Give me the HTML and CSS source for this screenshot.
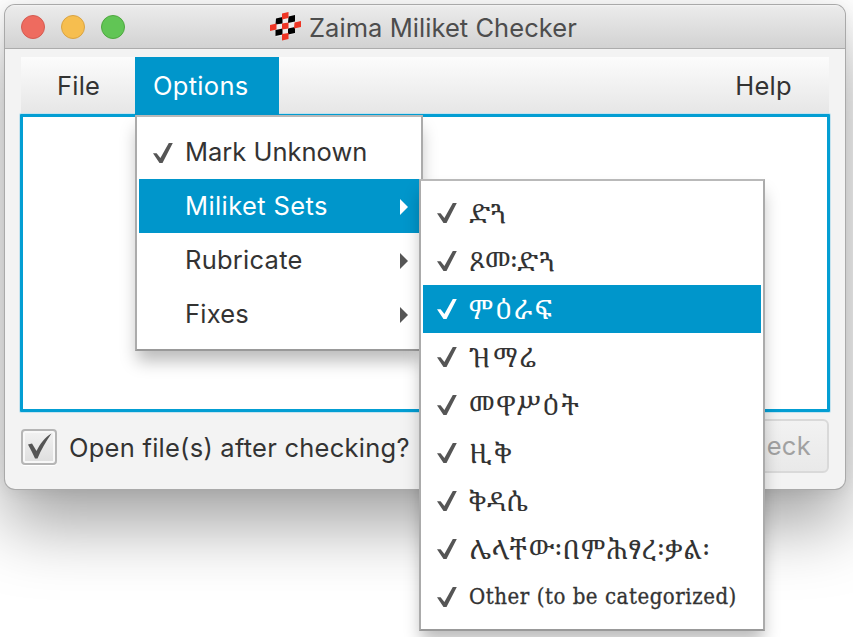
FILE: index.html
```html
<!DOCTYPE html>
<html lang="en">
<head>
<meta charset="utf-8">
<title>Zaima Miliket Checker</title>
<link rel="stylesheet" href="styles.css">
</head>
<body>
<svg class="defs" width="0" height="0"><defs>
<symbol id="tick" viewBox="0 0 20 20"><path d="M0 10.200H3.600L7.400 15 15.800 0H19.800L9.500 20H6.500Z"/></symbol>
<symbol id="arrow" viewBox="0 0 8 16"><path d="M0 0V16L8 8Z"/></symbol>
</defs></svg>
<div class="window">
  <header class="titlebar">
    <div class="lights"><i class="light red"></i><i class="light yellow"></i><i class="light green"></i></div>
    <h1 class="title">
      <svg class="logo" viewBox="0 0 31 29"><path fill="#eee" d="M6 7 25 4V22L6 25Z"/><g fill="#000"><path d="M6 6.500 12.500 5V11.500L5.500 12.500ZM18.500 4.500 25 3V9.500L18 11ZM5.500 18 12.500 16.500V22.500L5.500 24ZM18 16.500 25 15V21L18 22.500Z"/></g><g fill="#ee3524"><path d="M12 1.500 18.500 0V6L12 7.500ZM0 13 6.500 11.500V17.500L0 19ZM12 11.500 18.500 10.500V16.500L12 17.500ZM24.500 10.500 31 9V15L24 16.500ZM12 22 18.500 21V27L12 28.500Z"/></g></svg>
      <span class="title-text">Zaima Miliket Checker</span>
    </h1>
  </header>
  <main class="content">
    <nav class="menubar">
      <span class="menu file">File</span>
      <div class="menu options"><span class="options-text">Options</span>
        <div class="popup main-popup">
          <div class="item"><svg class="tick"><use href="#tick"/></svg><span class="mark">Mark Unknown</span></div>
          <div class="item active"><span class="sets">Miliket Sets</span><svg class="arrow"><use href="#arrow"/></svg></div>
          <div class="item"><span class="rub">Rubricate</span><svg class="arrow"><use href="#arrow"/></svg></div>
          <div class="item"><span class="fix">Fixes</span><svg class="arrow"><use href="#arrow"/></svg></div>
          <div class="popup sub-popup">
            <div class="item"><svg class="tick"><use href="#tick"/></svg><span class="s1">ድጓ</span></div>
            <div class="item"><svg class="tick"><use href="#tick"/></svg><span class="s2">ጾመ፡ድጓ</span></div>
            <div class="item active"><svg class="tick"><use href="#tick"/></svg><span class="s3">ምዕራፍ</span></div>
            <div class="item"><svg class="tick"><use href="#tick"/></svg><span class="s4">ዝማሬ</span></div>
            <div class="item"><svg class="tick"><use href="#tick"/></svg><span class="s5">መዋሥዕት</span></div>
            <div class="item"><svg class="tick"><use href="#tick"/></svg><span class="s6">ዚቅ</span></div>
            <div class="item"><svg class="tick"><use href="#tick"/></svg><span class="s7">ቅዳሴ</span></div>
            <div class="item"><svg class="tick"><use href="#tick"/></svg><span class="s8">ሌላቸው፡በምሕፃረ፡ቃል፡</span></div>
            <div class="item"><svg class="tick"><use href="#tick"/></svg><span class="other">Other (to be categorized)</span></div>
          </div>
        </div>
      </div>
      <span class="menu help">Help</span>
    </nav>
    <div class="editor"></div>
    <footer class="actions">
      <span class="checkbox"><svg viewBox="0 0 24 27"><path d="M0 11.500 4 10.500 8.500 18C12 11 17 4 23.500 0.500C18 8 13 17 9.500 25.500H7C5 21 2.500 16 0 11.500Z"/></svg></span>
      <span class="open">Open file(s) after checking?</span>
      <button class="check" disabled>Check</button>
    </footer>
  </main>
</div>
</body>
</html>
```

FILE: styles.css
```css
* { box-sizing: border-box; }
html, body { margin: 0; width: 853px; height: 637px; overflow: hidden; }
body { background: #fff; font: 25.5px/30px Inter, "Liberation Sans", sans-serif; color: #333; padding: 5px 0 0 5px; }
span { white-space: nowrap; }
.defs { position: absolute; }
.window { width: 840px; height: 484px; border-radius: 10px; background: #f3f3f3; box-shadow: 0 0 0 1px #a9a9a9, 0 36px 68px 0 rgba(0,0,0,.36), 0 2px 16px rgba(0,0,0,.08); }
.titlebar { height: 44px; display: flex; align-items: center; position: relative; border-radius: 10px 10px 0 0; border-bottom: 1px solid #acacac; background: linear-gradient(#f5f5f5, #ebebeb 2px, #d2d2d2); }
.lights { display: flex; gap: 16px; margin-left: 16px; }
.light { width: 24px; height: 24px; border-radius: 50%; border: 1px solid; }
.red { background: #ee6b5f; border-color: #d45b51; }
.yellow { background: #f6be4f; border-color: #d9a343; }
.green { background: #61c555; border-color: #4ea73f; }
.title { display: flex; align-items: center; margin: 2px 0 0 145px; font-size: 25.5px; font-weight: 400; color: #4d4d4d; }
.title-text { letter-spacing: .05px; }
.logo { width: 31px; height: 29px; margin: -2px 8px 0 0; }
.content { padding: 8px 16px 0; }
.menubar { height: 57px; display: flex; background: linear-gradient(#fcfcfc, #e6e6e6); }
.menu { height: 58px; line-height: 57px; }
.file { width: 114px; padding-left: 36px; letter-spacing: .2px; }
.options { position: relative; width: 144px; padding-left: 18px; background: #0096cb; color: #fff; }
.options-text { letter-spacing: .3px; }
.help { margin: 0 37px 0 auto; letter-spacing: .3px; }
.editor { height: 298px; margin: 0 -1px; border: 3px solid #039ed3; border-radius: 1px; background: #fff; box-shadow: 0 0 0 1px #c5e3ef; }
.popup { position: absolute; background: #fff; border: 2px solid; border-color: #b9b9b9 #ababab #999; color: #333; box-shadow: 0 12px 16px -2px rgba(0,0,0,.27); }
.main-popup { left: 0; top: 58px; width: 288px; height: 236px; padding: 8px 1px 8px 2px; z-index: 2; }
.item { display: flex; align-items: center; height: 54px; padding-left: 46px; position: relative; line-height: 30px; }
.active { background: #0096cb; color: #fff; }
.sets { letter-spacing: .4px; }
.rub { letter-spacing: .25px; }
.fix { letter-spacing: .2px; }
.tick { width: 20px; height: 20px; fill: #555; margin: 2px 12px 0 -32px; }
.active .tick, .active .arrow { fill: #fff; }
.arrow { width: 8px; height: 16px; fill: #555; margin: 2px 12px 0 auto; }
.sub-popup { left: 282px; top: 62px; width: 346px; height: 452px; padding: 8px 2px; font-family: "Noto Serif Ethiopic", "Noto Sans Ethiopic", "DejaVu Serif", serif; font-size: 27px; }
.sub-popup .item { height: 48px; }
.sub-popup .tick { margin-top: 0; }
.sub-popup .item.active .tick, .sub-popup .item .tick { fill: #555; }
.sub-popup .item.active .tick { fill: #fff; }
.s1 { letter-spacing: -1px; }
.s2 { letter-spacing: -.3px; }
.s3 { letter-spacing: 2px; }
.s4 { letter-spacing: 3px; }
.s5 { letter-spacing: .9px; }
.s6 { letter-spacing: 4px; }
.s7 { letter-spacing: .3px; }
.s8 { letter-spacing: .5px; }
.other { font: 22px/30px "DejaVu Serif Condensed", "DejaVu Serif", serif; font-stretch: condensed; letter-spacing: .54px; -webkit-text-stroke: .3px #333; }
.actions { display: flex; align-items: center; height: 72px; position: relative; }
.checkbox { width: 36px; height: 36px; border: 2px solid #b5b5b5; border-radius: 4px; background: linear-gradient(#f2f2f2, #dedede); box-shadow: inset 0 0 0 2px #f8f8f8, 0 1px 0 #fff; display: flex; padding: 2px 0 0 5px; position: relative; top: -1px; }
.checkbox svg { width: 24px; height: 27px; fill: #555; flex: none; }
.open { margin-left: 12px; letter-spacing: .25px; }
.check { width: 120px; height: 54px; margin: -4px 0 0 auto; border: 2px solid #d9d9d9; border-radius: 6px; background: linear-gradient(#f2f2f2, #e9e9e9); font: inherit; color: #a1a1a1; text-align: right; padding-right: 16px; letter-spacing: .3px; }
```
